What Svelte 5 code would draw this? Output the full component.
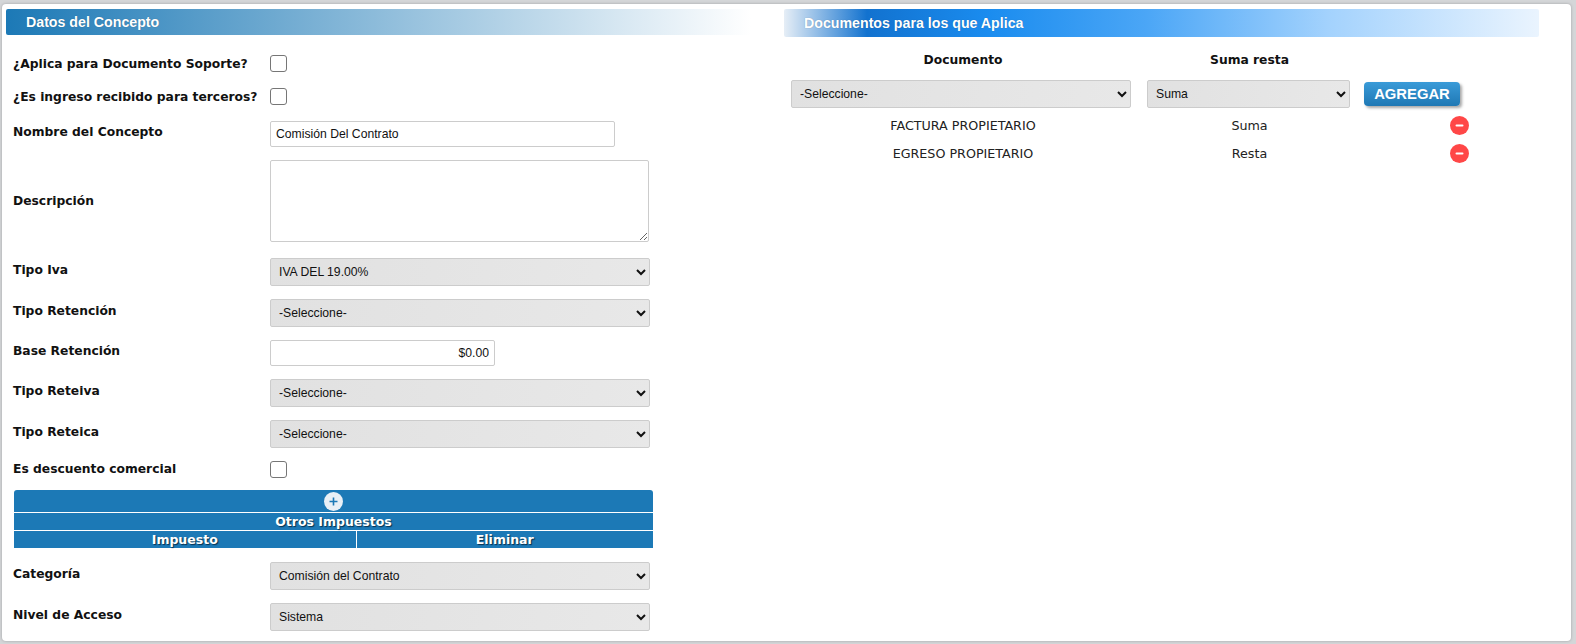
<script lang="ts">
  // Concept form: left column holds the fields, right column the documents it applies to.
  const NONE = '-Seleccione-';

  let rows = [
    { documento: 'FACTURA PROPIETARIO', operacion: 'Suma' },
    { documento: 'EGRESO PROPIETARIO', operacion: 'Resta' }
  ];

  function remove(i: number) {
    rows = rows.filter((_, idx) => idx !== i);
  }
</script>

{#snippet minus()}
  <svg viewBox="0 0 19 19" width="19" height="19" aria-hidden="true">
    <circle cx="9.5" cy="9.5" r="9.5" fill="#ff4747" />
    <rect x="5.5" y="8.5" width="8" height="2" rx="1" fill="#fff" />
  </svg>
{/snippet}

<div class="page">
  <div class="card">
    <section class="left">
      <h2 class="title title-left">Datos del Concepto</h2>

      <form class="fields">
        <div class="row r-check first">
          <span class="label">¿Aplica para Documento Soporte?</span>
          <input type="checkbox" />
        </div>
        <div class="row r-check">
          <span class="label">¿Es ingreso recibido para terceros?</span>
          <input type="checkbox" />
        </div>
        <div class="row name-row">
          <span class="label up">Nombre del Concepto</span>
          <input class="text name" type="text" value="Comisión Del Contrato" />
        </div>
        <div class="row">
          <span class="label">Descripción</span>
          <textarea></textarea>
        </div>
        <div class="row iva-row">
          <span class="label up">Tipo Iva</span>
          <select><option>IVA DEL 19.00%</option></select>
        </div>
        <div class="row">
          <span class="label up">Tipo Retención</span>
          <select><option>{NONE}</option></select>
        </div>
        <div class="row">
          <span class="label up">Base Retención</span>
          <input class="text base" type="text" value="$0.00" />
        </div>
        <div class="row">
          <span class="label up">Tipo Reteiva</span>
          <select><option>{NONE}</option></select>
        </div>
        <div class="row">
          <span class="label up">Tipo Reteica</span>
          <select><option>{NONE}</option></select>
        </div>
        <div class="row r-check last-check">
          <span class="label up-check">Es descuento comercial</span>
          <input type="checkbox" />
        </div>

        <table class="taxes">
          <colgroup>
            <col class="col-a" />
            <col />
          </colgroup>
          <thead>
            <tr>
              <th colspan="2" class="add">
                <button type="button" class="plus" aria-label="Agregar impuesto">
                  <svg viewBox="0 0 19 19" width="19" height="19" aria-hidden="true">
                    <circle cx="9.5" cy="9.5" r="9.5" fill="#e9f0f6" />
                    <path d="M9.5 5.5v8M5.5 9.5h8" stroke="#1c79b6" stroke-width="1.6" fill="none" />
                  </svg>
                </button>
              </th>
            </tr>
            <tr><th colspan="2" class="head">Otros Impuestos</th></tr>
            <tr>
              <th class="head split">Impuesto</th>
              <th class="head">Eliminar</th>
            </tr>
          </thead>
        </table>

        <div class="row">
          <span class="label up">Categoría</span>
          <select><option>Comisión del Contrato</option></select>
        </div>
        <div class="row">
          <span class="label up">Nivel de Acceso</span>
          <select><option>Sistema</option></select>
        </div>
      </form>
    </section>

    <section class="right">
      <h2 class="title title-right">Documentos para los que Aplica</h2>

      <table class="docs">
        <thead>
          <tr>
            <th class="c-doc">Documento</th>
            <th class="c-op">Suma resta</th>
            <th class="c-act"></th>
          </tr>
        </thead>
        <tbody>
          <tr class="controls">
            <td><select><option>{NONE}</option></select></td>
            <td><select><option>Suma</option></select></td>
            <td><button type="button" class="agregar">AGREGAR</button></td>
          </tr>
          {#each rows as row, i (row.documento)}
            <tr class="item">
              <td>{row.documento}</td>
              <td>{row.operacion}</td>
              <td>
                <button type="button" class="del" aria-label="Eliminar" onclick={() => remove(i)}>
                  {@render minus()}
                </button>
              </td>
            </tr>
          {/each}
        </tbody>
      </table>
    </section>
  </div>
</div>

<style>
  :global(body) {
    margin: 0;
    background: #d4d6d8;
  }
  .page {
    height: 644px;
    padding: 4px 5px 3px 2px;
    box-sizing: border-box;
  }
  .card {
    display: flex;
    height: 637px;
    box-sizing: border-box;
    padding: 5px 0 0 4px;
    background: #fff;
    border-radius: 4px;
    box-shadow: 0 0 3px rgba(0, 0, 0, 0.25);
  }
  .left {
    width: 778px;
    flex: none;
  }
  .right {
    flex: 1;
  }
  .title {
    margin: 0;
    box-sizing: border-box;
    color: #fff;
    font: bold 14.2px "Liberation Sans", Arial, sans-serif;
    border-radius: 2px;
    text-shadow: 0 0 1px rgba(0, 0, 0, 0.3);
  }
  .title-left {
    width: 745px;
    height: 26px;
    line-height: 26px;
    padding-left: 20px;
    background: linear-gradient(to right, #1c79b6 0, #ffffff 100%);
  }
  .title-right {
    width: 755px;
    height: 28px;
    line-height: 28px;
    padding-left: 20px;
    background: linear-gradient(to right, #e6eef6 0, #1272cf 11%, #1a8cef 27%, #4ba6f6 48%, #a3d2fd 72%, #eaf4fe 100%);
  }
  .fields {
    padding: 0 0 0 7px;
  }
  .row {
    display: flex;
    align-items: center;
    margin-top: 13px;
  }
  .row.r-check {
    margin-top: 16px;
    height: 17px;
  }
  .row.first {
    margin-top: 20px;
  }
  .row.name-row {
    margin-top: 16px;
  }
  .row.iva-row {
    margin-top: 16px;
  }
  .row.last-check {
    margin-top: 13px;
  }
  .label {
    width: 257px;
    flex: none;
    color: #111;
    font: bold 12.3px "DejaVu Sans", Verdana, sans-serif;
    white-space: nowrap;
  }
  .label.up {
    position: relative;
    top: -2px;
  }
  .label.up-check {
    position: relative;
    top: -1px;
  }
  input[type="checkbox"] {
    appearance: none;
    width: 17px;
    height: 17px;
    margin: 0;
    background: #fff;
    border: 1px solid #767676;
    border-radius: 3px;
  }
  .text,
  textarea {
    box-sizing: border-box;
    background: #fff;
    border: 1px solid #ccc;
    border-radius: 2px;
    color: #111;
    font: 12.2px "Liberation Sans", Arial, sans-serif;
    outline: none;
  }
  .text {
    height: 26px;
    padding: 0 5px;
  }
  .name {
    width: 345px;
  }
  .base {
    width: 225px;
    text-align: right;
  }
  textarea {
    display: block;
    width: 379px;
    height: 82px;
    margin: 0;
  }
  select {
    box-sizing: border-box;
    width: 380px;
    height: 28px;
    padding: 0 4px;
    background: linear-gradient(100deg, #e1e1e1, #e8e8e8);
    border: 1px solid #ccc;
    border-radius: 2px;
    color: #111;
    font: 12.2px "Liberation Sans", Arial, sans-serif;
  }
  .taxes {
    width: 639px;
    margin: 12px 0 14px 1px;
    border-collapse: collapse;
    table-layout: fixed;
  }
  .col-a {
    width: 342px;
  }
  .taxes th {
    padding: 0;
    background: #1c79b6;
    color: #fff;
    font: bold 12.5px "DejaVu Sans", Verdana, sans-serif;
    text-align: center;
    text-shadow: 1px 1px 1px #08304d;
  }
  .add {
    height: 22px;
    border-radius: 3px 3px 0 0;
    border-bottom: 1px solid #fff;
  }
  .head {
    height: 17px;
    line-height: 17px;
    border-bottom: 1px solid #fff;
  }
  tr:last-child .head {
    border-bottom: 0;
  }
  .split {
    border-right: 1px solid #fff;
  }
  .plus,
  .del {
    display: block;
    margin: 0 auto;
    padding: 0;
    background: none;
    border: 0;
    cursor: pointer;
    line-height: 0;
  }
  .docs {
    width: 764px;
    margin-top: 8px;
    margin-left: 7px;
    border-collapse: separate;
    border-spacing: 0;
    table-layout: fixed;
  }
  .docs th {
    height: 35px;
    padding: 0 12px 0 0;
    color: #111;
    font: bold 12.3px "DejaVu Sans", Verdana, sans-serif;
    line-height: 31px;
    text-align: center;
    vertical-align: top;
  }
  .docs th.c-act {
    padding: 0;
  }
  .c-doc {
    width: 344px;
  }
  .c-op {
    width: 205px;
  }
  .docs td {
    padding: 0;
    text-align: center;
    color: #222;
    font: 12.7px "DejaVu Sans", Verdana, sans-serif;
  }
  .controls td {
    height: 31px;
    text-align: left;
    vertical-align: top;
  }
  .controls select {
    display: block;
    width: 340px;
  }
  .controls td:nth-child(2) select {
    width: 203px;
  }
  .item td {
    height: 28px;
    padding-right: 12px;
  }
  .item td:last-child {
    padding-right: 0;
  }
  .agregar {
    display: block;
    width: 96px;
    height: 24px;
    margin-top: 2px;
    padding: 0;
    background: linear-gradient(to bottom, #3a9bd8, #1f78b4);
    border: 0;
    border-radius: 4px;
    box-shadow: 2px 2px 3px rgba(0, 0, 0, 0.35);
    color: #fff;
    font: bold 14.8px "Liberation Sans", Arial, sans-serif;
  }
</style>
